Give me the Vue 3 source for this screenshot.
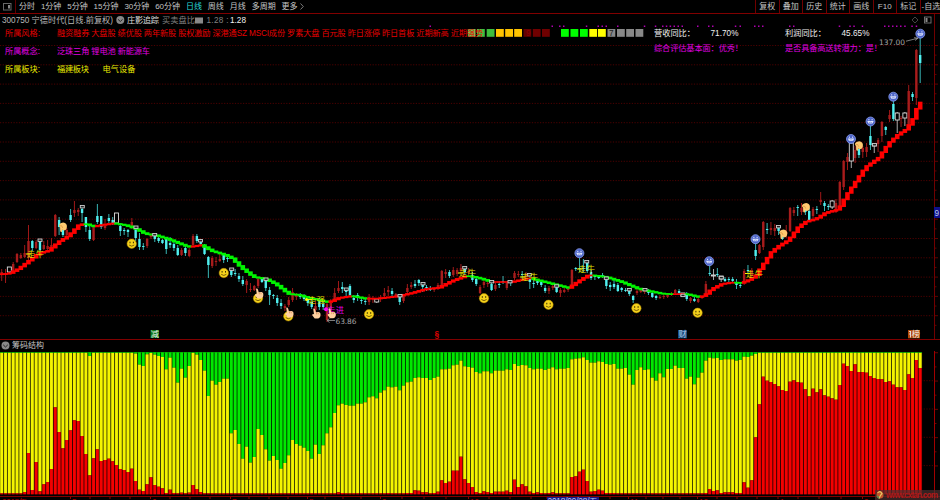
<template>
  <div class="terminal">
    <header class="toolbar">
      <div class="toggle">
        <svg width="9" height="8" viewBox="0 0 9 8">
          <rect x="0.5" y="0.5" width="7.5" height="6.5" fill="none" stroke="#666" />
          <rect x="5" y="2" width="2" height="3.5" fill="#888" />
        </svg>
      </div>
      <nav class="periods">
        <span
          v-for="p in periods"
          :key="p"
          :class="{ active: p === '日线' }"
        >{{ p }}</span>
        <svg class="more" width="4" height="7" viewBox="0 0 4 7">
          <path d="M0.5 0.5L3.3 3.5L0.5 6.5" fill="none" stroke="#999" stroke-width="0.8" />
        </svg>
      </nav>
      <nav class="tools">
        <span v-for="t in tools" :key="t">{{ t }}</span>
      </nav>
    </header>

    <svg class="price" width="940" height="325" viewBox="0 14 940 325">
      <line
        v-for="n in 15"
        :key="'g' + n"
        x1="0"
        x2="934"
        :y1="26.2 + n * 19.3"
        :y2="26.2 + n * 19.3"
        class="grid"
      />

      <!-- 标题 -->
      <text x="2" y="23" textLength="111" class="t gray">300750 宁德时代(日线.前复权)</text>
      <circle cx="120.3" cy="20" r="4" fill="#888" />
      <path d="M118 19.3l2.3 2.2l2.3-2.2" class="chev" />
      <text x="127" y="23" textLength="32" class="t light">庄影追踪</text>
      <text x="162" y="23" textLength="33" class="t dim">买卖盘比</text>
      <rect x="195" y="17.5" width="8" height="6" fill="#888" />
      <text x="206.5" y="23" textLength="22" class="t dim">1.28 :</text>
      <text x="230" y="23" textLength="16" class="t white">1.28</text>
      <path d="M915 17l3 3l-3 3l-3-3z" fill="none" stroke="#555" stroke-width="0.8" />
      <rect x="924.5" y="17" width="6.5" height="6" fill="none" stroke="#777" stroke-width="0.9" />
      <rect x="925.5" y="18" width="2" height="4" fill="#888" />

      <!-- 所属信息 -->
      <rect
        v-for="(s, i) in squares"
        :key="'s' + i"
        :x="s[0]"
        y="29"
        width="7.8"
        height="7.8"
        :fill="s[1]"
      />
      <text x="609" y="36" class="t digit">7</text>
      <text x="526" y="36" class="t digit faint">9</text>
      <text x="5" y="36" textLength="35" class="t red">所属风格:</text>
      <text x="57" y="36" textLength="426" class="t red">融资融券 大盘股 绩优股 两年新股 股权激励 深港通SZ MSCI成份 罗素大盘 百元股 昨日涨停 昨日首板 近期新高 近期强势</text>
      <text x="5" y="54" textLength="35" class="t purple">所属概念:</text>
      <text x="57" y="54" textLength="93" class="t purple">泛珠三角 锂电池 新能源车</text>
      <text x="5" y="72" textLength="35" class="t yellow">所属板块:</text>
      <text x="57" y="72" textLength="32" class="t yellow">福建板块</text>
      <text x="102.5" y="72" textLength="33" class="t yellow">电气设备</text>
      <text x="654" y="35.5" textLength="41" class="t white">营收同比：</text>
      <text x="710.5" y="35.5" textLength="28" class="t white">71.70%</text>
      <text x="785" y="35.5" textLength="41" class="t white">利润同比：</text>
      <text x="841.5" y="35.5" textLength="28" class="t white">45.65%</text>
      <text x="654" y="50.5" textLength="89" class="t purple">综合评估基本面：优秀！</text>
      <text x="785" y="50.5" textLength="97" class="t purple">是否具备高送转潜力：是！</text>
      <rect
        v-for="x in dots"
        :key="'d' + x"
        :x="x"
        y="25.5"
        width="1.5"
        height="1.5"
        fill="#b000b0"
      />

      <!-- K线 -->
      <g v-for="(c, i) in candles" :key="'k' + i">
        <rect
          :x="barX(i) - 0.5"
          :y="c[0]"
          width="1"
          :height="c[3] - c[0]"
          :fill="wick[c[4]]"
        />
        <rect
          :x="barX(i) - (c[4] === 2 ? 2 : 1.2)"
          :y="c[1]"
          :width="c[4] === 2 ? 4 : 2.4"
          :height="Math.max(c[2] - c[1], 1)"
          :fill="body[c[4]]"
          :stroke="c[4] === 2 ? '#ddd' : 'none'"
          stroke-width="0.9"
        />
      </g>

      <!-- 趋势线 -->
      <rect
        v-for="(m, i) in ribbon"
        :key="'m' + i"
        :x="barX(i) - 2.3"
        :y="m.y"
        width="4.6"
        :height="m.h"
        :fill="m.color"
      />
      <rect
        v-for="(b, i) in marks"
        :key="'b' + i"
        :x="b[0] - 2"
        :y="b[1] - 1.5"
        width="4"
        height="2.4"
        fill="#222"
        stroke="#ccc"
        stroke-width="0.9"
      />

      <g v-for="(w, i) in bulls" :key="'w' + i">
        <path
          :d="`M${w[0] - 9} ${w[1]}h5`"
          stroke="#ff0"
          stroke-width="1"
        />
        <text :x="w[0] - 8" :y="w[1] + 3" textLength="17" class="t olive">{{ w[2] }}</text>
      </g>
      <circle cx="306.5" cy="299.5" r="1.5" fill="#ff0" />
      <circle cx="326" cy="309.2" r="2" fill="#f0f" />
      <text x="327" y="312.5" textLength="17" class="t purple">走进</text>

      <!-- 表情 -->
      <g v-for="(f, i) in smiles" :key="'f' + i" :transform="`translate(${f[0]} ${f[1]})`">
        <circle r="4.7" fill="#f5d21c" stroke="#b98d00" stroke-width="0.5" />
        <path d="M-1.7 -2v1.6M1.7 -2v1.6" stroke="#3a2c00" stroke-width="1" />
        <path d="M-2.6 1.3Q0 3.6 2.6 1.3" fill="none" stroke="#5a4200" stroke-width="0.8" />
      </g>
      <g v-for="(f, i) in sads" :key="'a' + i" :transform="`translate(${f[0]} ${f[1]})`">
        <circle r="4.5" fill="#4c64c8" stroke="#8799ea" stroke-width="0.8" />
        <path d="M-3.2 -0.4h6.4l-1.2 2.4h-4z" fill="#dfe6ff" />
        <path d="M-1.6 -2.4v1.2M1.6 -2.4v1.2" stroke="#e8ecff" stroke-width="1" />
        <path d="M-1.6 1.3Q0 0.2 1.6 1.3" fill="none" stroke="#5f72c8" stroke-width="0.6" />
      </g>
      <g v-for="(f, i) in thumbs" :key="'t' + i" :transform="`translate(${f[0]} ${f[1]})`">
        <path
          d="M-3.8 -1Q-4 -4 0.5 -4.5Q4.6 -4 4.2 0Q4 3.5 0.5 3.5L-0.5 2.5L-0.8 5Q-2.8 5.5 -2.6 3V0.5z"
          fill="#ffca70"
        />
        <path d="M-3.5 -1.2H-1L0 1" fill="none" stroke="#d58c35" stroke-width="0.6" />
      </g>
      <g v-for="(f, i) in hands" :key="'h' + i" :transform="`translate(${f[0]} ${f[1]})`">
        <path
          d="M-3 -5Q-1.6 -5.7 -1 -4L-0.3 -1.5L2.7 -1.6Q4.6 -1 4.4 1.2Q4 4.5 1.5 4.8H-1.5L-4 1.5Q-4 0 -2.2 0.5z"
          fill="#ffd0a0"
        />
        <path d="M0.3 -1.2v1.8M2 -1v1.6" stroke="#c67a45" stroke-width="0.6" />
      </g>

      <!-- 高低点 -->
      <text x="879" y="44.5" textLength="26" class="t num">137.00</text>
      <path d="M906 41.2L918 38.2M914 37.7L918 38.2L915 40.5" class="arrow" />
      <text x="335.5" y="324" textLength="21" class="t num">63.86</text>
      <path d="M335 320.500H327M329.5 318.5L327 320.5L329.5 322.5" class="arrow" />

      <!-- 事件 -->
      <rect x="150.5" y="330" width="8.5" height="8" fill="#087a18" />
      <text x="150.8" y="337" class="t white">减</text>
      <text x="434.5" y="337" textLength="5" class="t signal">§</text>
      <rect x="678" y="330" width="9" height="8.3" fill="#164a7c" />
      <text x="678.5" y="337" class="t ice">财</text>
      <rect x="908" y="330" width="12" height="8.3" fill="#b54c0b" />
      <path d="M909 331.500h2M910.500 331v6.500M909 334h1.500" stroke="#e4e4e4" stroke-width="0.9" />
      <text x="911.7" y="337" class="t white">榜</text>

      <!-- 右轴 -->
      <line x1="934.5" x2="934.5" y1="14" y2="339" stroke="#700000" />
      <path
        v-for="n in 30"
        :key="'y' + n"
        :d="`M935 ${26.2 + n * 9.65 + 9.65}h${n % 2 ? 3 : 1.5}`"
        stroke="#600000"
      />
      <rect x="934" y="207" width="6" height="11" fill="#10108c" />
      <text x="934.5" y="215.5" class="t ice">9</text>
    </svg>

    <div class="subtitle">
      <svg width="9" height="9" viewBox="0 0 9 9">
        <circle cx="4.5" cy="4.5" r="4" fill="#888" />
        <path d="M2.2 3.8l2.3 2.2l2.3-2.2" class="chev" />
      </svg>
      <span>筹码结构</span>
    </div>

    <svg class="chips" width="940" height="149" viewBox="0 351 940 149">
      <line
        v-for="y in [380.7, 409, 437.3, 465.6]"
        :key="y"
        x1="921"
        x2="934"
        :y1="y"
        :y2="y"
        class="grid"
      />
      <g v-for="(b, i) in chips" :key="i">
        <rect :x="barX(i) - 1.92" y="352" width="3.83" :height="b.top - 352" fill="#004800" />
        <rect :x="barX(i) - 1.92" :y="b.top" width="3.83" :height="b.red - b.top" fill="#505000" />
        <rect :x="barX(i) - 1.92" :y="b.red" width="3.83" :height="494.3 - b.red" fill="#4c0000" />
        <rect :x="barX(i) - 1.42" y="352" width="2.84" :height="b.top - 352" fill="#00e800" />
        <rect :x="barX(i) - 1.42" :y="b.top" width="2.84" :height="b.red - b.top" fill="#f4f400" />
        <rect :x="barX(i) - 1.42" :y="b.red" width="2.84" :height="494.3 - b.red" fill="#f40000" />
      </g>
      <rect x="0" y="352" width="922" height="1" fill="#00a000" opacity="0.6" />
      <line x1="0" x2="940" y1="496.5" y2="496.5" stroke="#800000" />
      <line x1="934.5" x2="934.5" y1="351" y2="500" stroke="#a00000" />
      <path
        v-for="n in 9"
        :key="'r' + n"
        :d="`M935 ${338.6 + n * 14.15}h${n % 2 ? 3 : 1.5}`"
        stroke="#700000"
      />
      <path v-for="x in ticks" :key="'x' + x" :d="`M${x} 497v2`" stroke="#900000" />
      <text x="2" y="505" textLength="25" class="t date">2018年</text>
      <text v-for="m in months" :key="m[1]" :x="m[0]" y="505" class="t date">{{ m[1] }}</text>
      <rect x="547" y="497" width="52" height="3" fill="#141488" />
      <text x="547.5" y="503.5" textLength="50" class="t ice">2018/09/28/五</text>
      <rect x="875" y="490" width="65" height="10" fill="#4b3030" opacity="0.7" />
      <circle cx="880" cy="495" r="3.5" fill="#c2532b" />
      <path d="M877.5 493Q880 490 882 493.500Q880 495.500 879 498.500" fill="none" stroke="#e6ca62" stroke-width="1.1" />
      <path d="M877 496l2 2.200" stroke="#3c9a58" stroke-width="1.2" />
      <text x="886" y="497.5" textLength="52" class="t mark">www.cxtan.com</text>
    </svg>
  </div>
</template>

<script setup>
const periods = ["分时", "1分钟", "5分钟", "15分钟", "30分钟", "60分钟", "日线", "周线", "月线", "多周期", "更多"];
const tools = ["复权", "叠加", "历史", "统计", "画线", "F10", "标记", "-自选"];

const STEP = 3.827;
const barX = (i) => 1.7 + i * STEP;

// 0 阳线, 1 阴线, 2 空心
const wick = ["#a01818", "#38b4b4", "#aaa"];
const body = ["#a81c1c", "#50f0f0", "#000"];

// 最高, 实体上沿, 实体下沿, 最低, 类型
const candles = [
  [269,272,275,281,0],[269,274,275,283,0],[267,267,272,273,2],[262,264,272,273,0],[253,254,262,263,0],[253,255,258,259,0],
  [245,253,257,258,0],[225,241,258,260,0],[240,241,248,251,1],[240,242,248,249,0],[239,240,250,251,1],[241,245,249,250,0],
  [240,246,249,250,0],[238,245,248,249,0],[214,215,236,237,0],[217,220,227,235,1],[225,230,235,237,1],[228,230,235,236,0],
  [209,215,220,222,1],[201,210,213,217,0],[208,210,212,216,0],[208,209,213,222,1],[217,217,227,232,1],[226,230,239,241,1],
  [226,227,240,241,0],[204,216,222,224,1],[216,216,227,229,1],[219,226,228,230,0],[214,218,221,223,1],[217,220,223,225,1],
  [213,213,223,223,2],[223,226,231,236,1],[228,230,231,235,1],[229,230,232,237,1],[218,222,226,229,0],[226,228,238,241,1],
  [233,239,247,250,1],[243,246,246,250,1],[238,239,246,248,0],[233,235,237,239,0],[233,234,239,242,1],[237,238,241,243,1],
  [239,240,243,244,1],[238,239,249,254,1],[237,243,245,248,1],[241,244,248,251,1],[245,248,255,256,1],[248,250,255,256,0],
  [246,248,253,256,1],[248,250,256,257,0],[234,236,245,246,0],[234,236,241,243,1],[239,242,244,246,1],[244,245,254,255,1],
  [256,257,265,278,1],[256,258,266,268,0],[257,261,262,266,0],[254,259,261,262,0],[253,254,260,263,1],[255,258,259,262,1],
  [269,270,275,277,1],[269,273,274,276,1],[273,276,279,282,1],[276,280,284,286,1],[279,281,285,293,0],[283,289,290,292,0],
  [285,286,290,291,0],[277,279,286,288,0],[279,279,282,283,1],[279,280,288,291,1],[287,290,295,305,1],[294,295,296,299,1],
  [295,298,303,306,1],[299,303,306,309,1],[304,306,308,311,0],[297,300,305,307,0],[288,292,300,302,0],[293,294,297,300,0],
  [293,296,297,299,1],[294,296,299,301,1],[297,300,303,306,1],[300,302,307,309,1],[300,306,310,313,0],[298,300,307,310,1],
  [301,304,307,310,1],[303,304,320,322,0],[299,303,310,312,0],[288,293,299,302,0],[281,288,291,293,0],[282,287,289,293,1],
  [288,289,292,297,1],[284,286,295,297,1],[295,298,300,303,1],[293,295,297,301,1],[297,300,301,304,1],[299,301,302,305,1],
  [294,297,302,305,0],[296,298,300,303,0],[299,299,302,303,2],[295,297,299,302,0],[288,293,296,298,0],[286,290,292,296,0],
  [288,291,294,296,1],[293,294,297,298,0],[294,295,302,305,1],[294,296,301,303,0],[284,288,292,294,0],[282,285,287,289,0],
  [280,284,286,288,1],[279,280,283,286,1],[282,283,287,292,1],[285,287,288,291,1],[286,288,290,291,1],[287,288,290,292,0],
  [283,285,288,290,0],[270,271,285,287,0],[269,272,274,278,0],[270,272,276,278,1],[267,270,275,277,0],[268,270,274,276,0],
  [264,268,271,273,0],[267,268,272,275,1],[268,271,273,276,0],[272,275,280,282,1],[277,279,284,286,1],[285,287,293,294,0],
  [280,282,285,288,0],[280,283,284,287,0],[283,284,290,291,1],[283,285,289,291,0],[281,284,285,288,1],[276,281,282,284,1],
  [281,283,288,290,0],[281,282,283,286,1],[271,273,278,280,0],[271,274,275,277,0],[271,274,275,279,1],[272,274,277,280,0],
  [275,278,282,289,1],[280,283,284,288,1],[279,281,283,285,1],[280,282,285,287,1],[285,288,291,293,1],[286,288,291,294,0],
  [284,286,288,290,0],[285,287,292,293,1],[288,290,293,297,0],[288,290,292,293,0],[287,289,290,292,0],[269,270,285,288,0],
  [267,268,269,271,1],[257,268,269,272,1],[259,268,269,272,1],[261,263,271,273,1],[270,272,278,280,1],[275,276,277,280,1],
  [275,277,277,279,1],[273,275,277,278,1],[277,279,286,289,1],[282,285,287,291,1],[280,284,287,289,1],[283,285,291,292,1],
  [287,288,290,292,1],[288,290,291,292,1],[288,290,294,296,1],[295,296,300,303,1],[289,291,293,295,0],[289,290,292,293,0],
  [289,291,292,294,0],[289,291,293,295,1],[291,293,297,298,1],[295,296,298,300,1],[295,297,298,299,0],[294,296,297,299,0],
  [293,294,297,298,0],[292,294,295,296,0],[289,290,293,294,0],[289,291,293,295,1],[293,293,296,296,2],[292,294,299,301,1],
  [297,298,301,303,0],[297,299,301,302,1],[297,299,302,303,0],[296,297,298,299,0],[281,284,295,297,0],[265,273,274,276,1],
  [269,275,275,280,2],[268,274,275,277,1],[276,276,279,282,2],[277,279,281,282,1],[277,279,280,282,1],[277,279,281,283,1],
  [279,282,285,289,1],[283,285,286,288,1],[269,271,283,285,0],[265,270,271,274,1],[268,270,276,278,0],[243,250,256,260,1],
  [244,245,253,254,0],[221,222,247,250,0],[223,229,230,234,1],[222,228,230,235,0],[224,228,231,236,0],[226,227,231,235,1],
  [232,234,239,240,1],[225,232,234,238,0],[207,208,231,232,0],[207,210,213,216,0],[205,207,208,216,1],[203,208,212,215,0],
  [206,209,212,215,1],[208,211,220,221,1],[207,209,216,219,0],[206,209,210,214,1],[192,200,202,205,0],[201,203,206,211,1],
  [204,206,207,210,1],[200,201,207,209,2],[199,203,212,213,0],[181,182,208,210,0],[160,161,187,190,0],[153,157,162,170,0],
  [143,143,161,168,2],[146,150,158,163,0],[146,149,155,158,1],[146,148,152,158,0],[143,147,152,157,0],[125,136,145,150,1],
  [143,144,146,153,2],[138,140,144,152,0],[121,122,136,142,0],[126,127,130,135,1],[110,115,119,122,0],[98,104,119,121,1],
  [112,113,120,133,2],[116,118,119,127,0],[112,113,118,126,2],[85,91,124,127,0],[92,94,97,101,1],[49,50,98,105,0],
  [35,55,63,83,1],
];

// 均线关键点
const maPoints = [
  [0,274.3],[10,273.7],[20,268.7],[30,261],[40,253.3],[50,250.7],[60,241.7],[70,235.7],[81,224.3],[87,224],[95,226.5],
  [103,225],[115,223.3],[127,225.3],[137,228.7],[147,234],[157,235.3],[170,239.3],[180,243.3],[190,247],[197,246],[203,245],
  [213,251],[225,254.5],[233,258],[243,268],[255,277],[267,279],[277,284],[290,294],[300,295],[310,298],[330,302.3],
  [340,298],[353,296],[367,298.7],[380,298.5],[400,296],[413,293],[427,289],[440,287.7],[453,281],[467,276],[473,276.5],[480,278],
  [493,282],[513,282],[530,278],[550,283],[570,288],[580,281],[590,275],[607,277],[623,282],[640,289],[663,293.7],
  [673,294.2],[687,294],[700,297],[706,295.7],[713,289],[723,284],[733,282.5],[743,283],[750,280],[757,276],[763,266.7],
  [773,251.7],[780,246],[790,240],[800,226.7],[807,221.7],[817,219],[827,212.7],[840,209.3],[848,195],[857,181.7],
  [867,167],[880,157.7],[890,143.3],[900,134],[908,129],[915,118],[917.5,110],[923,101],
];
const maAt = (x) => {
  const k = Math.max(1, maPoints.findIndex((p) => p[0] >= x));
  const [x0, y0] = maPoints[k - 1];
  const [x1, y1] = maPoints[k];
  return y0 + ((x - x0) / (x1 - x0)) * (y1 - y0);
};
const ribbon = candles.map((_, i) => {
  const a = maAt(Math.max(0, barX(i) - STEP / 2));
  const b = maAt(barX(i) + STEP / 2);
  const h = Math.abs(b - a) + 1.6;
  return { y: (a + b) / 2 - h / 2, h, color: b > a ? "#00f400" : "#ff0000" };
});

const marks = [
  [40,240.5],[82.3,207],[136,227.5],[154.7,235],[200.5,241],[231.7,269.5],[266,279.5],[346.3,289.5],[400,296],[423,284],
  [464.7,268],[491.7,282],[510,282],[529.3,275],[556.7,286.3],[586.7,262],[606.3,278.5],[629.3,290],[645,290],
  [683,295.7],[721.3,278],[778.5,227],[874.5,145],
];
const bulls = [
  [35,254,"走牛"],[467,273,"走牛"],[529,277,"走牛"],[586,269,"走牛"],[754,273.5,"走牛"],[316,299.5,"走强"],
];
const smiles = [
  [131.7,243.7],[223.8,273],[258,298.3],[288.3,316.3],[369,314.2],[484,298.2],[548.5,304.8],[636.4,308.2],[697.6,312.8],
];
const sads = [[579.4,253.2],[709.2,261.2],[755.5,239.2],[851,139],[870.5,121.5],[893.3,96.7],[920.3,33.7]];
const thumbs = [[62.7,227],[783,234],[805.7,207.5],[858.7,145.7]];
const hands = [[259,293.7],[289.2,312.7],[316.2,313.7],[331.5,313.5]];

const squares = [
  [467.8,"#6cc04c"],[477,"#3dbd3d"],[486.7,"#3dbd3d"],[496,"#ffc400"],[505.2,"#ffc400"],[514.2,"#ffc400"],
  [523.5,"#640000"],[532.8,"#700000"],[542,"#700000"],[561,"#0f0"],[570.5,"#0f0"],[580,"#0f0"],[589.3,"#ff0"],
  [598,"#ff0"],[607.5,"#888"],[617,"#888"],[626.2,"#888"],[635.5,"#888"],
];
const dots = [
  429.5,551.5,559,563,585.8,597.5,601.5,605.5,617,643.8,654.8,662,665.8,669.6,673.5,677.5,681.5,697,708,712,734.8,
  739.5,754,758,762,789,793,838.7,849.3,853.3,861.7,884,888,892,896,900,904.2,911.3,915.7,
];

// 筹码数据, 单位 1/3 像素
const greenEdge = [
  ...Array(23).fill(53), 63, ...Array(11).fill(53),
  56,89,93,58,54,59,63,66,103,68,98,143,101,128,93,53,59,75,107,183,137,149,141,131,131,
  295,285,327,371,335,383,366,282,300,343,377,363,375,401,384,361,315,327,332,338,348,
  371,329,357,331,295,277,234,211,206,210,212,212,206,206,202,187,184,190,173,166,155,157,155,166,152,142,140,
  129,127,129,129,135,129,125,103,103,101,91,89,77,94,96,98,111,115,109,109,115,107,107,107,103,105,
  87,93,90,91,99,103,101,101,105,101,97,103,101,101,99,73,71,70,67,75,83,83,79,81,87,89,87,101,
  101,99,119,149,105,97,105,103,128,137,115,127,102,102,92,99,99,131,125,148,128,113,77,68,70,69,75,73,73,73,77,75,
  65,66,62,57,...Array(43).fill(53),
];
const redEdge = [
  ...Array(6).fill(475),471,354,465,381,469,448,441,402,217,291,340,315,286,256,258,303,357,421,370,343,378,375,371,
  379,390,402,405,411,401,438,464,468,448,427,450,455,460,474,464,474,475,473,475,473,450,462,471,...Array(28).fill(475),
  ...Array(7).fill(475),472,474,...Array(11).fill(475),474,475,475,475,475,474,474,466,467,472,472,475,474,470,
  436,444,440,407,407,365,433,444,456,471,474,469,471,474,470,470,470,467,471,434,456,448,454,470,474,472,474,475,474,
  472,475,475,475,475,426,424,410,404,438,470,468,464,467,474,474,474,475,
  ...Array(22).fill(475),474,462,468,466,474,472,472,472,474,474,442,458,436,307,208,125,137,141,147,154,165,168,140,136,
  141,143,163,184,161,172,163,181,185,190,194,150,86,93,108,88,111,111,113,123,129,132,133,141,139,149,157,157,165,118,
  129,75,99,
];
const chips = candles.map((_, i) => ({
  top: 335 + greenEdge[i] / 3,
  red: 335 + redEdge[i] / 3,
}));

const ticks = [
  70.5,90,110,130,150.5,170,190,210,230.5,249,269,288,307.5,325,343,361,380.5,402,424,446,468.5,489,510,531,547,
  610,628.5,646,663,680,697.5,717,737,757,778,798,819,841,862.5,
];
const months = [[72,"5"],[152,"6"],[232,"7"],[309,"8"],[382,"9"],[470,"10"],[630,"11"],[699,"12"],[780,"1"],[864,"2"]];
</script>

<style>
body {
  background: #000;
}
</style>

<style scoped>
.terminal {
  width: 940px;
  height: 500px;
  display: flex;
  flex-direction: column;
  overflow: hidden;
  background: #000;
  font-family: "Liberation Sans", "Noto Sans CJK SC", sans-serif;
  font-size: 8px;
  color: #c4c4c4;
}
.toolbar {
  height: 14px;
  box-sizing: border-box;
  flex: none;
  display: flex;
  align-items: stretch;
  line-height: 13px;
  border-bottom: 1px solid #800000;
}
.toggle {
  width: 16px;
  box-sizing: border-box;
  display: flex;
  align-items: center;
  padding-left: 3px;
  border-right: 1px solid #600000;
}
.periods {
  display: flex;
  align-items: center;
  gap: 5.9px;
  margin-left: 3px;
  white-space: nowrap;
}
.periods .active {
  color: #28dada;
}
.more {
  margin-left: -3px;
}
.tools {
  display: flex;
  margin-left: auto;
  white-space: nowrap;
}
.tools span {
  width: 23.5px;
  box-sizing: border-box;
  border-left: 1px solid #700000;
  text-align: center;
}
.tools span:last-child {
  width: 20.5px;
  text-align: left;
  padding-left: 1px;
}
svg {
  display: block;
  flex: none;
}
.grid {
  stroke: #600000;
  stroke-width: 0.8;
  stroke-dasharray: 1.2 1.5;
}
.chev {
  fill: none;
  stroke: #222;
  stroke-width: 1;
}
.arrow {
  fill: none;
  stroke: #999;
  stroke-width: 0.8;
}
.t {
  font-size: 8.2px;
}
.gray {
  fill: #b8b8b8;
}
.light {
  fill: #ddd;
}
.dim {
  fill: #808080;
}
.white {
  fill: #f0f0f0;
}
.red {
  fill: #e80000;
}
.purple {
  fill: #e000e0;
}
.yellow {
  fill: #eaea00;
}
.olive {
  fill: #e0e000;
}
.digit {
  fill: #222;
}
.faint {
  fill: #900000;
}
.num {
  font-family: "DejaVu Sans", sans-serif;
  font-size: 7.5px;
  fill: #a4a4a4;
}
.signal {
  fill: #e00000;
  font-weight: bold;
}
.ice {
  fill: #b8cce8;
}
.date {
  fill: #b00000;
}
.mark {
  fill: #b01818;
  font-weight: bold;
}
.subtitle {
  height: 12px;
  flex: none;
  box-sizing: border-box;
  display: flex;
  align-items: center;
  gap: 2px;
  padding-left: 1px;
  line-height: 11px;
  border-top: 1px solid #800000;
}
</style>
